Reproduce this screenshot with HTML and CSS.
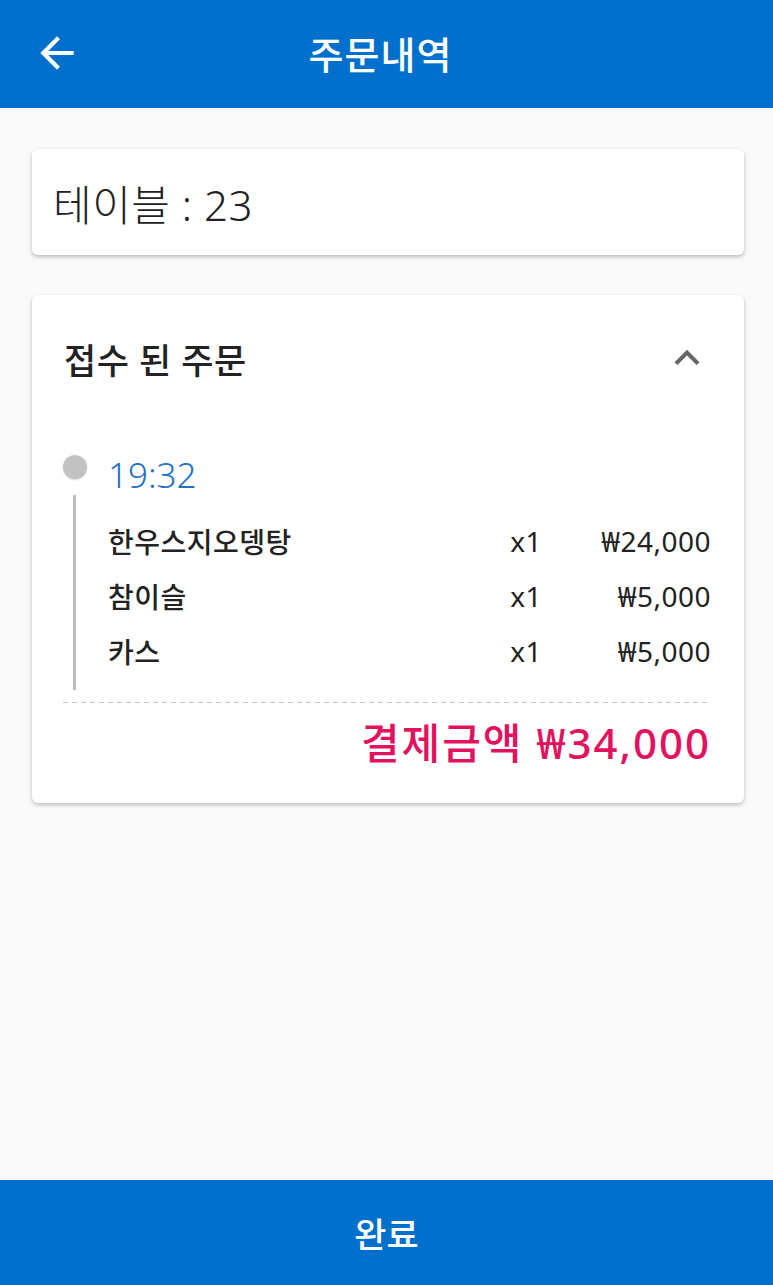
FILE: index.html
```html
<!DOCTYPE html>
<html lang="ko">
<head>
    <meta charset="utf-8">
    <link rel="stylesheet" href="styles.css">
</head>
<body>
    <div class="header">
        <div class="back">
            <svg width="50" height="50" viewBox="0 0 24 24"><path fill="#fff" d="M20 11H7.83l5.59-5.59L12 4l-8 8 8 8 1.41-1.41L7.83 13H20v-2z"/></svg>
        </div>
        <div class="title">주문내역</div>
        <div></div>
    </div>
    <div class="main">
        <div class="card table_card">테이블 : 23</div>
        <div class="card order_card">
            <div class="order_head">
                <div class="order_title">접수 된 주문</div>
                <svg width="50" height="50" viewBox="0 0 24 24"><path fill="#666" d="M12 8l-6 6 1.41 1.41L12 10.83l4.59 4.58L18 14z"/></svg>
            </div>
            <div class="order_body">
                <div class="time_row">
                    <div class="dot"></div>
                    <div class="time">19:32</div>
                </div>
                <div class="items">
                    <div class="item"><span>한우스지오뎅탕</span><span class="qty">x1</span><span class="price">₩24,000</span></div>
                    <div class="item"><span>참이슬</span><span class="qty">x1</span><span class="price">₩5,000</span></div>
                    <div class="item"><span>카스</span><span class="qty">x1</span><span class="price">₩5,000</span></div>
                </div>
                <div class="dashed"></div>
                <div class="total">결제금액 ₩34,000</div>
            </div>
        </div>
    </div>
    <div class="done">완료</div>
</body>
</html>
```
FILE: styles.css
```css
body {
    margin: 0;
    height: 100vh;
    display: flex;
    flex-direction: column;
    background-color: #fafafa;
    font-family: "Noto Sans", "Noto Sans CJK KR", sans-serif;
    color: #222;
}
.header {
    height: 108px;
    flex-shrink: 0;
    background-color: #0070cc;
    display: grid;
    grid-template-columns: 82px 1fr 94px;
    align-items: center;
}
.back {
    padding-left: 32px;
    height: 50px;
    margin-top: -3px;
}
.title {
    text-align: center;
    color: #fff;
    font-size: 38px;
    font-weight: 500;
    letter-spacing: 1px;
    margin-top: -4px;
}
.main {
    flex: 1;
    padding: 0 29px 0 32px;
}
.card {
    background-color: #fff;
    border-radius: 6px;
    box-shadow: 0 2px 4px rgba(0, 0, 0, 0.25);
}
.table_card {
    margin-top: 41px;
    height: 106px;
    padding-left: 21px;
    display: flex;
    align-items: center;
    font-size: 42px;
    font-weight: 300;
    letter-spacing: 0.5px;
}
.order_card {
    margin-top: 40px;
    height: 508px;
    box-sizing: border-box;
}
.order_head {
    height: 126px;
    display: flex;
    align-items: center;
    justify-content: space-between;
    padding: 0 32px;
}
.order_title {
    font-size: 35px;
    font-weight: 500;
    letter-spacing: 0.5px;
}
.order_body {
    padding: 0 33px 0 31px;
}
.time_row {
    margin-top: 34px;
    display: flex;
    gap: 21px;
    height: 40px;
}
.dot {
    width: 24px;
    height: 24px;
    border-radius: 50%;
    background-color: #c2c2c2;
    box-shadow: 0 1px 2px rgba(0, 0, 0, 0.15);
}
.time {
    font-size: 35px;
    line-height: 40px;
    font-weight: 300;
    color: #1f72c4;
}
.items {
    margin-left: 10px;
    border-left: 3px solid #bdbdbd;
    padding: 18px 0 12px 32px;
}
.item {
    display: grid;
    grid-template-columns: 1fr auto 169px;
    height: 55px;
    align-items: center;
    font-size: 28px;
    font-weight: 500;
    letter-spacing: 0.5px;
}
.qty, .price {
    font-size: 28px;
    font-weight: 400;
}
.price {
    text-align: right;
}
.dashed {
    margin-top: 12px;
    height: 1px;
    background-image: repeating-linear-gradient(to right, #c4c4c4 0 5px, transparent 5px 9px);
}
.total {
    margin-top: 16px;
    text-align: right;
    font-size: 42px;
    line-height: 48px;
    font-weight: 500;
    letter-spacing: 2px;
    color: #e2125f;
}
.done {
    height: 105px;
    flex-shrink: 0;
    background-color: #0070cc;
    color: #fff;
    font-size: 35px;
    font-weight: 500;
    display: flex;
    align-items: center;
    justify-content: center;
}
```
